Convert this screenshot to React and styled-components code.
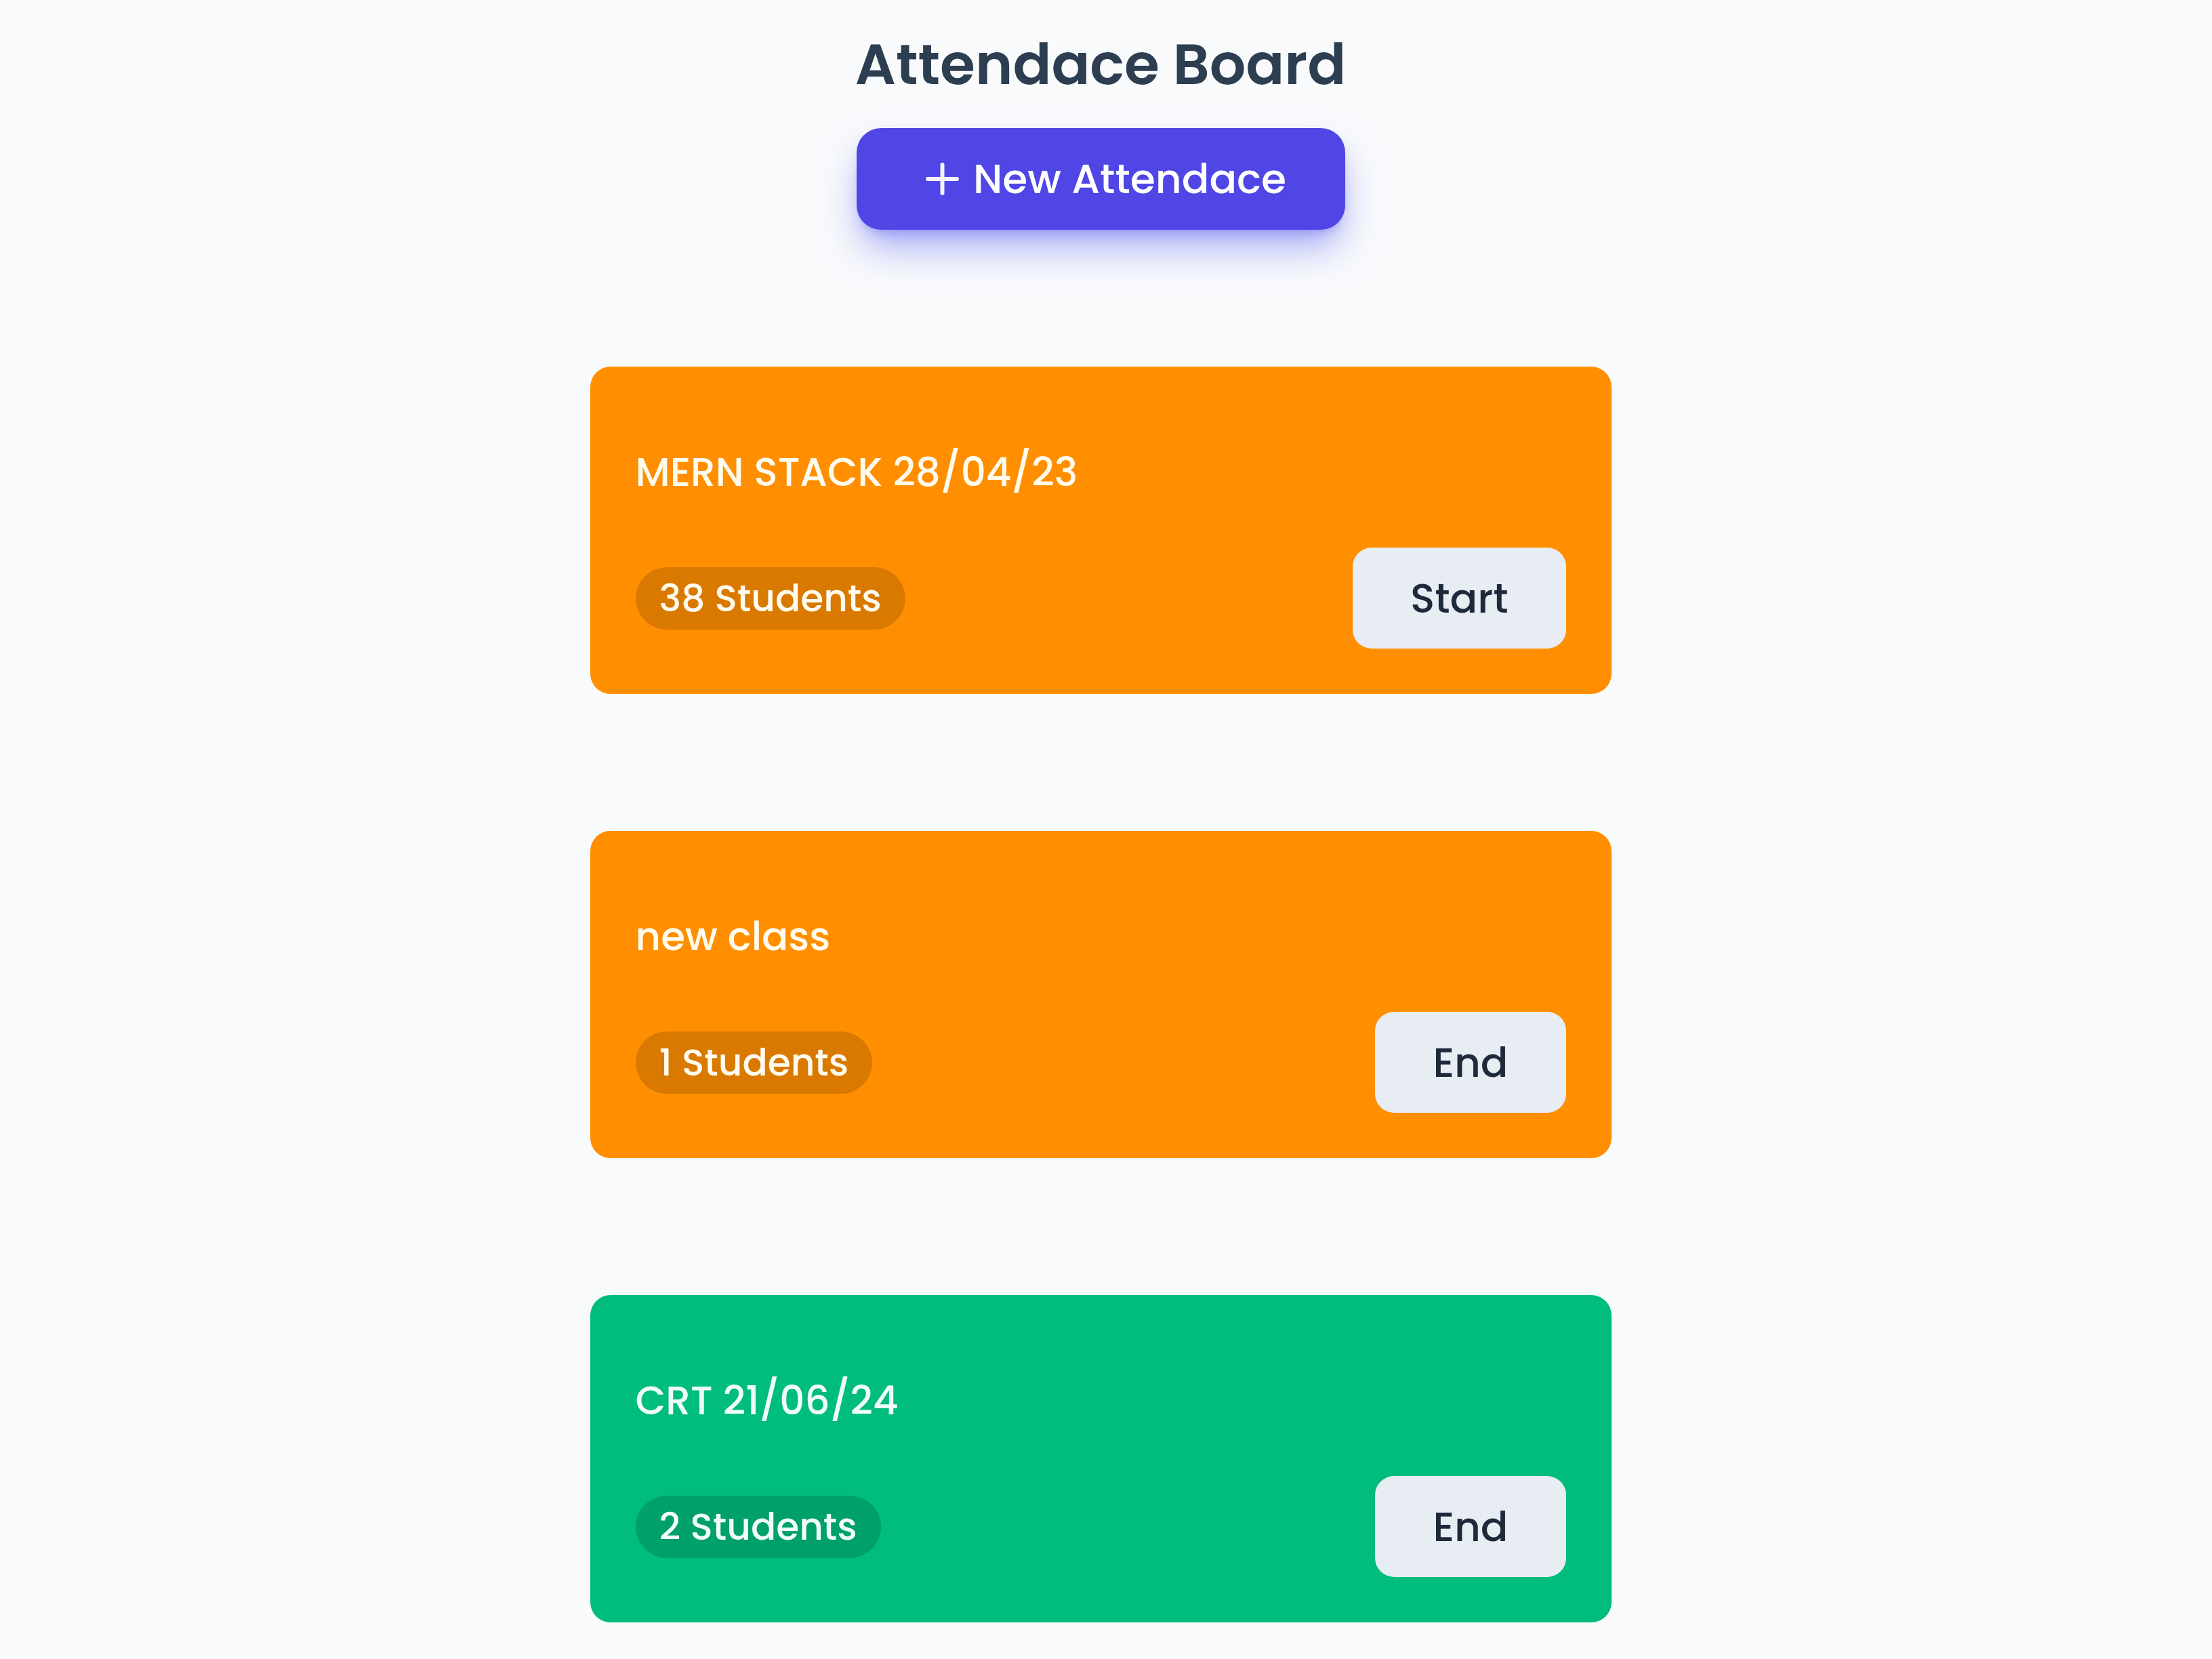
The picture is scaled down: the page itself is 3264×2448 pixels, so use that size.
import React from 'react';
import styled, { createGlobalStyle } from 'styled-components';

const GlobalStyle = createGlobalStyle`
    body {
        margin: 0;
        background: #f8fafc;
        font-family: "Poppins", "Open Sans", sans-serif;
    }
`;

const Page = styled.div`
    min-height: 100vh;
    padding: 53px 16px 56px 0;
    box-sizing: border-box;
    display: flex;
    flex-direction: column;
    align-items: center;
`;

const Heading = styled.h1`
    margin: 0;
    font-size: 84px;
    line-height: 1;
    font-weight: 600;
    color: #2c3e50;
`;

const NewButton = styled.button`
    margin-top: 52px;
    width: 721px;
    height: 150px;
    padding: 0 0 0 16px;
    border: none;
    border-radius: 36px;
    background: #4f46e5;
    color: #fff;
    display: flex;
    align-items: center;
    justify-content: center;
    gap: 21px;
    font-family: inherit;
    font-size: 60px;
    font-weight: 500;
    cursor: pointer;
    box-shadow: 0 32px 56px -8px rgba(99, 102, 241, 0.55),
        0 12px 18px -10px rgba(99, 102, 241, 0.5);
`;

const List = styled.div`
    margin-top: 202px;
    width: 1507px;
    display: flex;
    flex-direction: column;
    gap: 202px;
`;

const Card = styled.div`
    background: ${p => p.$bg};
    border-radius: 30px;
    padding: 127px 67px 67px;
    color: ${p => p.$ink};
`;

const CardTitle = styled.div`
    margin: 0 0 82px;
    font-size: 58px;
    line-height: 1;
    font-weight: 500;
`;

const Row = styled.div`
    display: flex;
    align-items: center;
    justify-content: space-between;
`;

const Pill = styled.span`
    height: 92px;
    padding: 0 35px;
    border-radius: 999px;
    background: rgba(0, 0, 0, 0.15);
    display: inline-flex;
    align-items: center;
    font-size: 55px;
    font-weight: 500;
`;

const ActionButton = styled.button`
    height: 149px;
    padding: 0 85px;
    border: none;
    border-radius: 28px;
    background: #e8edf4;
    color: #1e293b;
    font-family: inherit;
    font-size: 60px;
    font-weight: 500;
    cursor: pointer;
`;

const PlusIcon = () => (
    <svg width="49" height="48" viewBox="0 0 49 48">
        <path d="M24.5 3v42M3 24h43" stroke="#f4f3fe" strokeWidth="6" strokeLinecap="round" />
    </svg>
);

const sessions = [
    { title: 'MERN STACK 28/04/23', count: 38, action: 'Start', bg: '#ff8f00', ink: '#fffbef' },
    { title: 'new class', count: 1, action: 'End', bg: '#ff8f00', ink: '#fffbef' },
    { title: 'CRT 21/06/24', count: 2, action: 'End', bg: '#00bc7d', ink: '#effdf6' },
];

export default function App() {
    return (
        <>
            <GlobalStyle />
            <Page>
                <Heading>Attendace Board</Heading>
                <NewButton>
                    <PlusIcon />
                    <span>New Attendace</span>
                </NewButton>
                <List>
                    {sessions.map(s => (
                        <Card key={s.title} $bg={s.bg} $ink={s.ink}>
                            <CardTitle>{s.title}</CardTitle>
                            <Row>
                                <Pill>{s.count} Students</Pill>
                                <ActionButton>{s.action}</ActionButton>
                            </Row>
                        </Card>
                    ))}
                </List>
            </Page>
        </>
    );
}
